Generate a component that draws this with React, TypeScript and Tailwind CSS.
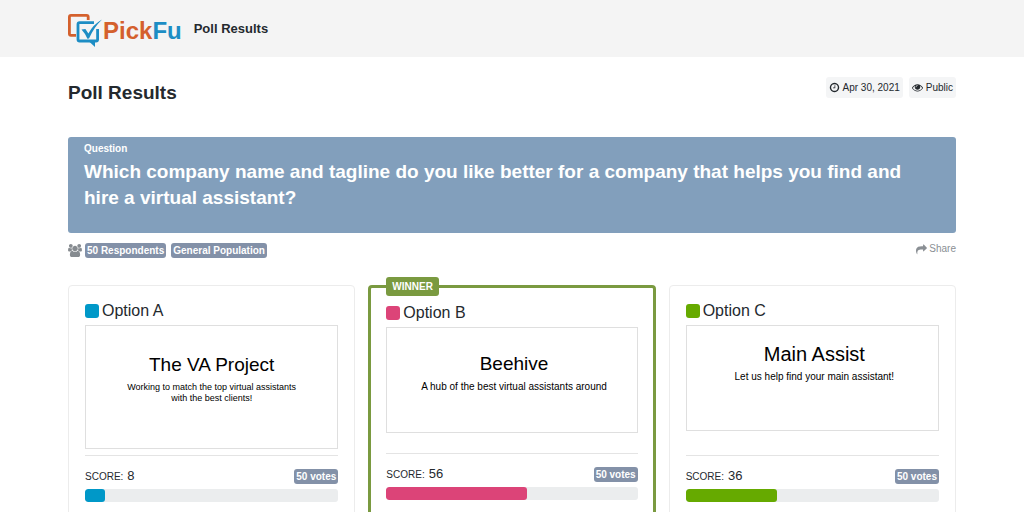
import clsx from "clsx";
import type { ReactNode } from "react";

type Option = {
  name: string;
  title: string;
  tagline: string[];
  score: number;
  votes: number;
  color: string;
  frame: string;
  titleSize: string;
  taglineSize: string;
  winner?: boolean;
};

const options: Option[] = [
  {
    name: "Option A",
    title: "The VA Project",
    tagline: ["Working to match the top virtual assistants", "with the best clients!"],
    score: 8,
    votes: 50,
    color: "bg-[#0098c8]",
    frame: "h-[124px] pt-[27px]",
    titleSize: "text-[19px]",
    taglineSize: "text-[9px]",
  },
  {
    name: "Option B",
    title: "Beehive",
    tagline: ["A hub of the best virtual assistants around"],
    score: 56,
    votes: 50,
    color: "bg-[#dc4478]",
    frame: "h-[106px] pt-6 pl-1",
    titleSize: "text-[19px]",
    taglineSize: "text-[10px]",
    winner: true,
  },
  {
    name: "Option C",
    title: "Main Assist",
    tagline: ["Let us help find your main assistant!"],
    score: 36,
    votes: 50,
    color: "bg-[#66aa00]",
    frame: "h-[106px] pt-4 pl-1",
    titleSize: "text-[20px]",
    taglineSize: "text-[10px]",
  },
];

const icons = {
  clock:
    "M1024 544v448q0 14-9 23t-23 9h-320q-14 0-23-9t-9-23v-64q0-14 9-23t23-9h224v-352q0-14 9-23t23-9h64q14 0 23 9t9 23zm416 352q0-148-73-273t-198-198-273-73-273 73-198 198-73 273 73 273 198 198 273 73 273-73 198-198 73-273zm224 0q0 209-103 385.5t-279.5 279.5-385.5 103-385.5-103-279.5-279.5-103-385.5 103-385.5 279.5-279.5 385.5-103 385.5 103 279.5 279.5 103 385.5z",
  eye: "M1664 960q-152-236-381-353 61 104 61 225 0 185-131.5 316.5t-316.5 131.5-316.5-131.5-131.5-316.5q0-121 61-225-229 117-381 353 133 205 333.5 326.5t434.5 121.5 434.5-121.5 333.5-326.5zm-720-384q0-20-14-34t-34-14q-125 0-214.5 89.5t-89.5 214.5q0 20 14 34t34 14 34-14 14-34q0-86 61-147t147-61q20 0 34-14t14-34zm848 384q0 34-20 69-140 230-376.5 368.5t-499.5 138.5-499.5-139-376.5-368q-20-35-20-69t20-69q140-229 376.5-368t499.5-139 499.5 139 376.5 368q20 35 20 69z",
  share:
    "M1792 640q0 26-19 45l-512 512q-19 19-45 19t-45-19-19-45v-256h-224q-98 0-175.5 6t-154 21.5-133 42.5-105.5 69.5-80 101-48.5 138.5-17.5 181q0 55 5 123 0 6 2.5 23.5t2.5 26.5q0 15-8.5 25t-23.5 10q-16 0-28-17-7-9-13-22t-13.5-30-10.5-24q-127-285-127-451 0-199 53-333 162-403 875-403h224v-256q0-26 19-45t45-19 45 19l512 512q19 19 19 45z",
  users:
    "M593 896q-162 5-265 128h-134q-82 0-138-40.5t-56-118.5q0-353 124-353 6 0 43.5 21t97.5 42.5 119 21.5q67 0 133-23-5 37-5 66 0 139 81 256zm1071 637q0 120-73 189.5t-194 69.5h-874q-121 0-194-69.5t-73-189.5q0-53 3.5-103.5t14-109 26.5-108.5 43-97.5 62-81 85.5-53.5 111.5-20q10 0 43 21.5t73 48 107 48 135 21.5 135-21.5 107-48 73-48 43-21.5q61 0 111.5 20t85.5 53.5 62 81 43 97.5 26.5 108.5 14 109 3.5 103.5zm-1024-1277q0 106-75 181t-181 75-181-75-75-181 75-181 181-75 181 75 75 181zm704 384q0 159-112.5 271.5t-271.5 112.5-271.5-112.5-112.5-271.5 112.5-271.5 271.5-112.5 271.5 112.5 112.5 271.5zm576 225q0 78-56 118.5t-138 40.5h-134q-103-123-265-128 81-117 81-256 0-29-5-66 66 23 133 23 59 0 119-21.5t97.5-42.5 43.5-21q124 0 124 353zm-128-609q0 106-75 181t-181 75-181-75-75-181 75-181 181-75 181 75 75 181z",
};

const Icon = ({ name, className }: { name: keyof typeof icons; className: string }) => (
  <svg
    aria-hidden
    viewBox={name === "users" ? "0 0 1920 1792" : "0 0 1792 1792"}
    fill="currentColor"
    className={clsx("shrink-0", className)}
  >
    <path d={icons[name]} />
  </svg>
);

const Badge = ({ children }: { children: ReactNode }) => (
  <span className="rounded-[3px] bg-[#8391a8] px-[2px] text-[10px] leading-[15px] font-bold whitespace-nowrap text-white">
    {children}
  </span>
);

const Logo = () => (
  <a href="#" aria-label="PickFu home" className="flex items-center pt-1">
    <svg aria-hidden viewBox="0 0 35 34" fill="none" className="h-[34px] w-[35px]">
      <path
        d="M8 21.3H3Q1.4 21.3 1.4 19.7V3Q1.4 1.4 3 1.4H18.6Q20.2 1.4 20.2 3V6"
        stroke="#d4602c"
        strokeWidth="2.8"
      />
      <path
        d="M26 8.6H11.6Q10 8.6 10 10.2V25.4Q10 27 11.6 27H28Q29.6 27 29.6 25.4V15"
        stroke="#1d8dc4"
        strokeWidth="2.8"
      />
      <path d="M20.5 27H27V33Z" fill="#1d8dc4" />
      <path d="M13.5 15.6L17.4 15L20.4 19.4Q25 10.5 34 5.4Q25.6 13.5 21 24.6L19.4 24.8Q17.4 19.8 13.5 15.6Z" fill="#1d8dc4" />
    </svg>
    <span className="text-[24px] leading-[34px] font-bold text-[#d4602c]">
      Pick<span className="text-[#1d8dc4]">Fu</span>
    </span>
  </a>
);

const OptionCard = ({ option }: { option: Option }) => (
  <article
    className={clsx(
      "relative flex flex-col rounded-[4px] pt-4 pb-6",
      option.winner ? "border-[3px] border-[#7a9a40] px-[15px]" : "border border-[#ececec] px-4",
    )}
  >
    {option.winner && (
      <span className="absolute -top-[11px] left-[15px] rounded-[3px] bg-[#7a9a40] px-[6px] text-[10px] leading-[19px] font-bold text-white">
        WINNER
      </span>
    )}
    <h3 className="flex items-center gap-[3px] text-[16px] leading-[18px]">
      <span className={clsx("size-[14px] rounded-[3px]", option.color)} />
      {option.name}
    </h3>

    <div className="mt-[5px] mb-[6px] flex-1">
      <div className={clsx("border border-[#dfdfdf] text-center text-black", option.frame)}>
        <p className={clsx("leading-6", option.titleSize)}>{option.title}</p>
        <p className={clsx("mt-[5px] leading-[11px]", option.taglineSize)}>
          {option.tagline.map((line) => (
            <span key={line} className="block">
              {line}
            </span>
          ))}
        </p>
      </div>
    </div>

    <hr className="border-[#e4e4e4]" />
    <div className="mt-3 flex items-center justify-between">
      <p className="flex items-baseline gap-1 text-[10px] leading-4">
        SCORE: <span className="text-[13px]">{option.score}</span>
      </p>
      <Badge>{option.votes} votes</Badge>
    </div>
    <div className="mt-1 h-[13px] overflow-hidden rounded-[3px] bg-[#ebedee]">
      <div className={clsx("h-full rounded-[3px]", option.color)} style={{ width: `${option.score}%` }} />
    </div>
  </article>
);

const App = () => (
  <div className="min-h-screen bg-white font-['Liberation_Sans',Arial,sans-serif] text-[#24292e]">
    <header className="bg-[#f4f4f4]">
      <div className="mx-auto flex h-[57px] max-w-[920px] items-center gap-3 px-4">
        <Logo />
        <span className="text-[13px] leading-5 font-bold">Poll Results</span>
      </div>
    </header>

    <main className="mx-auto max-w-[920px] px-4 pt-5 pb-8">
      <div className="flex items-start justify-between">
        <h1 className="pt-1 text-[19px] leading-6 font-bold">Poll Results</h1>
        <div className="flex gap-[6px] text-[10px] leading-[21px]">
          <span className="flex items-center gap-[2px] rounded-[3px] bg-[#f4f5f6] px-[3px]">
            <Icon name="clock" className="size-[11px]" />
            Apr 30, 2021
          </span>
          <span className="flex items-center gap-[3px] rounded-[3px] bg-[#f4f5f6] px-[3px]">
            <Icon name="eye" className="size-[11px]" />
            Public
          </span>
        </div>
      </div>

      <section className="mt-8 rounded-[3px] bg-[#829fbc] px-4 pt-[5px] pb-[22px] text-white">
        <p className="text-[10px] leading-[13px] font-bold">Question</p>
        <h2 className="mt-1 text-[19px] leading-[26px] font-bold">
          Which company name and tagline do you like better for a company that helps you find and hire a virtual assistant?
        </h2>
      </section>

      <div className="mt-2 flex items-start justify-between">
        <div className="flex items-center gap-[5px] pt-[2px]">
          <div className="flex items-center gap-[3px]">
            <Icon name="users" className="h-[13px] w-[14px] text-[#868b90]" />
            <Badge>50 Respondents</Badge>
          </div>
          <Badge>General Population</Badge>
        </div>
        <a href="#" className="flex items-center gap-[2px] text-[10px] leading-4 text-[#8a8f94]">
          <Icon name="share" className="size-[11px]" />
          Share
        </a>
      </div>

      <div className="mt-[27px] grid grid-cols-3 gap-[13px]">
        {options.map((option) => (
          <OptionCard key={option.name} option={option} />
        ))}
      </div>
    </main>
  </div>
);

export default App;
